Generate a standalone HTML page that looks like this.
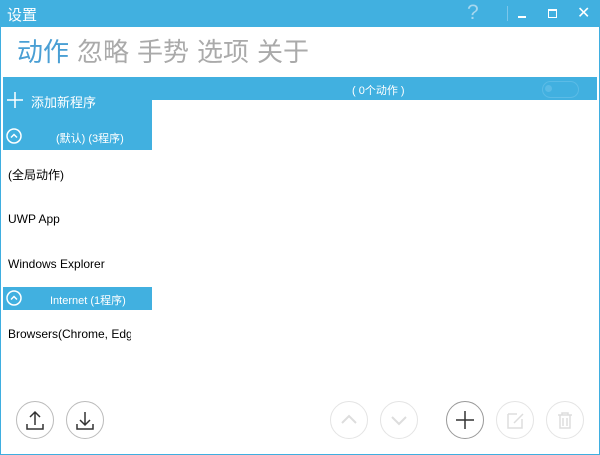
<!DOCTYPE html><html><head><meta charset="utf-8"><style>
body{margin:0;width:600px;height:455px;overflow:hidden;font-family:"Liberation Sans","Noto Sans CJK SC",sans-serif;background:#fff;position:relative}
.win{position:absolute;left:0;top:0;width:598px;height:453px;border:1px solid #3faee0}
.t{position:absolute;white-space:nowrap}
.tb{position:absolute;left:0;top:0;width:600px;height:27px;background:#41b0e0}
.tab{position:absolute;top:34px;font-size:26px;color:#aaa;line-height:36px}
.circ{position:absolute;width:36px;height:36px;border:1.5px solid #bbb;border-radius:50%;top:401px}
.circ.l{border-color:#e4e4e4}
.circ svg{position:absolute;left:0;top:0}
</style></head><body><div class="win"></div>
<div class="tb"></div>
<div class="t" style="left:7px;top:4px;color:#fff;font-size:15px">设置</div>
<div class="t" style="left:467px;top:1px;color:#a6d7ee;font-size:21px">?</div>
<div style="position:absolute;left:507px;top:6px;width:1px;height:15px;background:#7cc6ea"></div>
<div style="position:absolute;left:518px;top:16px;width:8px;height:2px;background:#fff"></div>
<div style="position:absolute;left:548px;top:9px;width:7px;height:6px;border:1px solid #fff;border-top-width:2px"></div>
<div class="t" style="left:577px;top:3px;color:#fff;font-size:16px">✕</div>
<div class="tab" style="left:17px;color:#4a9fd4">动作</div>
<div class="tab" style="left:77px">忽略</div>
<div class="tab" style="left:137px">手势</div>
<div class="tab" style="left:197px">选项</div>
<div class="tab" style="left:257px">关于</div>
<div style="position:absolute;left:3px;top:77px;width:594px;height:23px;background:#41b0e0"></div>
<div style="position:absolute;left:3px;top:77px;width:149px;height:73px;background:#41b0e0"></div>
<div class="t" style="left:352px;top:82px;color:#fff;font-size:11px">( 0个动作 )</div>
<div style="position:absolute;left:542px;top:81px;width:35px;height:15px;border:1px solid #5bbbe6;border-radius:9px"></div>
<div style="position:absolute;left:545px;top:85px;width:7px;height:7px;border-radius:50%;background:#5bbbe6"></div>
<svg style="position:absolute;left:7px;top:92px" width="16" height="16" stroke="#fff" stroke-width="1.5"><path d="M8 0v16M0 8h16"/></svg>
<div class="t" style="left:31px;top:92px;color:#fff;font-size:13px">添加新程序</div>
<svg style="position:absolute;left:6px;top:128px" width="16" height="16" fill="none" stroke="#fff" stroke-width="1.5"><circle cx="8" cy="8" r="7"/><path d="M5 9.5l3-3 3 3"/></svg>
<div class="t" style="left:56px;top:130px;color:#fff;font-size:11px">(默认) (3程序)</div>
<div class="t" style="left:8px;top:166px;font-size:12px">(全局动作)</div>
<div class="t" style="left:8px;top:212px;font-size:12px">UWP App</div>
<div class="t" style="left:8px;top:257px;font-size:12px">Windows Explorer</div>
<div style="position:absolute;left:3px;top:287px;width:149px;height:23px;background:#41b0e0"></div>
<svg style="position:absolute;left:6px;top:290px" width="16" height="16" fill="none" stroke="#fff" stroke-width="1.5"><circle cx="8" cy="8" r="7"/><path d="M5 9.5l3-3 3 3"/></svg>
<div class="t" style="left:50px;top:292px;color:#fff;font-size:11px">Internet (1程序)</div>
<div class="t" style="left:8px;top:327px;font-size:12px;width:123px;overflow:hidden">Browsers(Chrome, Edge</div>
<div class="circ" style="left:16px"><svg width="36" height="36" fill="none" stroke="#333" stroke-width="1.5"><path d="M18 10v13M13 15l5-5 5 5M10 22v5h16v-5"/></svg></div>
<div class="circ" style="left:66px"><svg width="36" height="36" fill="none" stroke="#333" stroke-width="1.5"><path d="M18 10v13M13 18l5 5 5-5M10 22v5h16v-5"/></svg></div>
<div class="circ l" style="left:330px"><svg width="36" height="36" fill="none" stroke="#ddd" stroke-width="2"><path d="M11 21l7-7 7 7"/></svg></div>
<div class="circ l" style="left:380px"><svg width="36" height="36" fill="none" stroke="#ddd" stroke-width="2"><path d="M11 15l7 7 7-7"/></svg></div>
<div class="circ" style="left:446px;border-color:#999"><svg width="36" height="36" fill="none" stroke="#333" stroke-width="1.5"><path d="M18 9v18M9 18h18"/></svg></div>
<div class="circ l" style="left:496px"><svg width="36" height="36" fill="none" stroke="#ddd" stroke-width="1.5"><path d="M11 12h9M11 12v14h14v-9M17 21l9-9"/></svg></div>
<div class="circ l" style="left:546px"><svg width="36" height="36" fill="none" stroke="#ddd" stroke-width="1.5"><path d="M11 13h14M15 13v-2h6v2M13 13v13h10v-13M16 16v8M20 16v8"/></svg></div>
</body></html>
